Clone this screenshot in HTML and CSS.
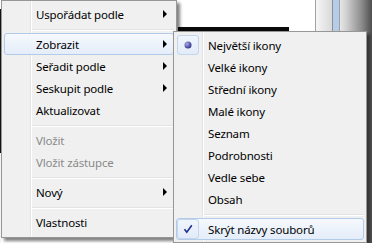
FILE: index.html
```html
<!DOCTYPE html>
<html lang="cs">
<head>
    <meta charset="UTF-8">
    <title>Kontextová nabídka</title>
    <link rel="stylesheet" href="styles.css">
</head>
<body>

    <!-- Desktop / window behind the menus -->
    <div class="backdrop">
        <div class="edge"></div>
        <div class="pane">
            <div class="pane-bar"></div>
        </div>
        <div class="pane-border"></div>
        <div class="scroll">
            <div class="scroll-track"></div>
            <div class="scroll-thumb"></div>
            <div class="scroll-side"></div>
        </div>
    </div>

    <!-- Main context menu -->
    <div class="menu main-menu">
        <div class="item"><span class="icon"></span><span class="label">Uspořádat podle</span><span class="arrow"></span></div>
        <div class="sep"></div>
        <div class="item hover"><span class="icon"></span><span class="label">Zobrazit</span><span class="arrow"></span></div>
        <div class="item"><span class="icon"></span><span class="label">Seřadit podle</span><span class="arrow"></span></div>
        <div class="item"><span class="icon"></span><span class="label">Seskupit podle</span><span class="arrow"></span></div>
        <div class="item"><span class="icon"></span><span class="label">Aktualizovat</span></div>
        <div class="sep"></div>
        <div class="item disabled"><span class="icon"></span><span class="label">Vložit</span></div>
        <div class="item disabled"><span class="icon"></span><span class="label">Vložit zástupce</span></div>
        <div class="sep"></div>
        <div class="item"><span class="icon"></span><span class="label">Nový</span><span class="arrow"></span></div>
        <div class="sep"></div>
        <div class="item"><span class="icon"></span><span class="label">Vlastnosti</span></div>
    </div>

    <!-- Submenu "Zobrazit" -->
    <div class="menu sub-menu">
        <div class="item">
            <span class="icon checked">
                <svg width="8" height="8" viewBox="0 0 8 8"><defs><radialGradient id="dot" cx="35%" cy="35%" r="70%"><stop offset="0" stop-color="#a9abe8"/><stop offset="1" stop-color="#2d2f8c"/></radialGradient></defs><circle cx="4" cy="4" r="3.5" fill="url(#dot)"/></svg>
            </span>
            <span class="label">Největší ikony</span>
        </div>
        <div class="item"><span class="icon"></span><span class="label">Velké ikony</span></div>
        <div class="item"><span class="icon"></span><span class="label">Střední ikony</span></div>
        <div class="item"><span class="icon"></span><span class="label">Malé ikony</span></div>
        <div class="item"><span class="icon"></span><span class="label">Seznam</span></div>
        <div class="item"><span class="icon"></span><span class="label">Podrobnosti</span></div>
        <div class="item"><span class="icon"></span><span class="label">Vedle sebe</span></div>
        <div class="item"><span class="icon"></span><span class="label">Obsah</span></div>
        <div class="sep"></div>
        <div class="item hover">
            <span class="icon checked">
                <svg width="10" height="10" viewBox="0 0 10 10"><path d="M1.5 5.2 L3.8 8.2 L8.8 1.2" fill="none" stroke="#1d2f8f" stroke-width="1.6"/></svg>
            </span>
            <span class="label">Skrýt názvy souborů</span>
        </div>
    </div>

</body>
</html>
```

FILE: styles.css
```css
body {
    margin: 0;
    width: 372px;
    height: 243px;
    overflow: hidden;
    position: relative;
    font-family: "Noto Sans", "Open Sans", sans-serif;
    font-size: 11.5px;
    letter-spacing: -0.15px;
    background: #fff;
}

/* Backdrop */
.backdrop {
    display: flex;
    height: 243px;
}
.edge {
    width: 1px;
    background: linear-gradient(to bottom, #fff 9px, #151515 9px, #151515 153px, #f4f4f4 153px);
}
.pane {
    width: 314px;
    background: #fff;
}
.pane-bar {
    margin: 27px 0 0 177px;
    width: 111px;
    height: 4px;
    background: #0a0a0a;
}
.pane-border {
    width: 1px;
    background: #a3a3a3;
}
.scroll {
    flex: 1;
    display: flex;
}
.scroll-track {
    width: 16px;
    background: linear-gradient(to right, #f6f6f6, #d9d9d9);
    border-right: 1px solid #8e8e8e;
}
.scroll-thumb {
    width: 6px;
    background: #b5cde8;
    border-right: 1px solid #a0a0a0;
}
.scroll-side {
    flex: 1;
    background: linear-gradient(to right, #e6e6e6 0, #d2d2d2 6px, #8a8a8a 22px, #4e4e4e 100%);
}

/* Menus */
.menu {
    position: absolute;
    box-sizing: border-box;
    padding: 2px;
    border: 1px solid #979797;
    background-color: #f0f0f0;
    background-image: linear-gradient(to right, transparent 28px, #e2e3e3 28px, #e2e3e3 29px, #fff 29px, #fff 30px, transparent 30px);
    box-shadow: 3px 3px 3px rgba(0, 0, 0, 0.5);
}
.main-menu {
    left: 1px;
    top: 0;
    width: 176px;
    padding-bottom: 4px;
}
.sub-menu {
    left: 173px;
    top: 31px;
    width: 194px;
}

.item {
    display: flex;
    align-items: center;
    height: 22px;
    box-sizing: border-box;
    border: 1px solid transparent;
    border-radius: 3px;
    color: #000;
}
.item.hover {
    border-color: #b2cbe8;
    background: linear-gradient(to bottom, #f6f9fe, #e4edf9);
}
.item.disabled {
    color: #8a8a8a;
}
.icon {
    width: 22px;
    height: 20px;
    margin-right: 9px;
    display: flex;
    align-items: center;
    justify-content: center;
    box-sizing: border-box;
    border-radius: 3px;
}
.icon.checked {
    border: 1px solid #c3d6ee;
    background: linear-gradient(to bottom, #f1f6fd, #e2ebf8);
}
.label {
    white-space: nowrap;
}
.arrow {
    margin-left: auto;
    margin-right: 6px;
    width: 0;
    height: 0;
    border-left: 4px solid #000;
    border-top: 4px solid transparent;
    border-bottom: 4px solid transparent;
}

.sep {
    height: 8px;
    margin-left: 28px;
    box-sizing: border-box;
    padding-top: 4px;
}
.sep::before {
    content: "";
    display: block;
    height: 1px;
    background: #e2e3e3;
    border-bottom: 1px solid #fff;
}
```
